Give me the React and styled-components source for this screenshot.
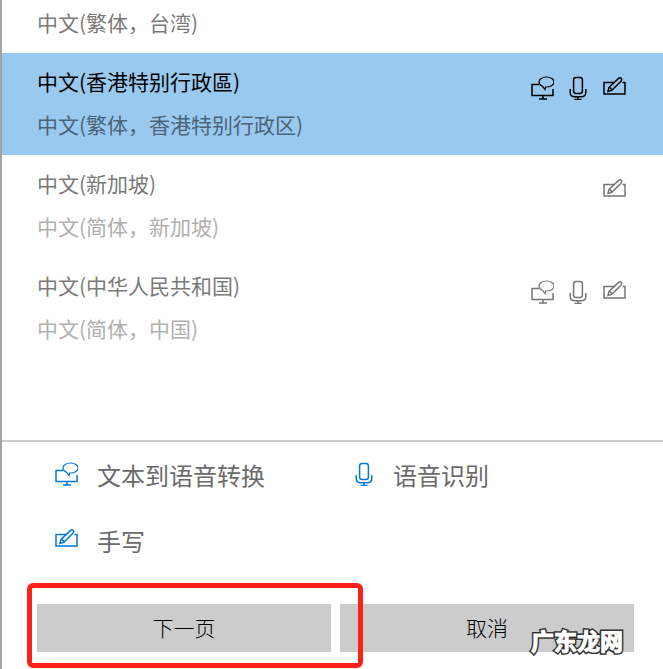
import React from 'react';
import styled, { createGlobalStyle } from 'styled-components'

const Global = createGlobalStyle`
html, body {
  margin: 0;
  padding: 0;
  background: #fff;
}
body {
  font-family: "Noto Sans CJK SC", "Liberation Sans", sans-serif;
}`

const Page = styled.div`
  position: relative;
  box-sizing: border-box;
  width: 663px;
  height: 669px;
  overflow: hidden;
  border-left: 2px solid #a3a3a3;
  background: #fff;
`

const List = styled.div`
  display: flex;
  flex-direction: column;
  height: 440px;
`

const TopRow = styled.div`
  box-sizing: border-box;
  height: 53px;
  padding: 7px 0 0 35px;
  font-size: 21px;
  line-height: 30px;
  color: #7a7a7a;
`

const Row = styled.div`
  box-sizing: border-box;
  display: flex;
  justify-content: space-between;
  height: 102px;
  padding: 13px 37px 0 35px;
  background: ${p => p.$selected ? '#99c9ef' : 'transparent'};
`

const Names = styled.div`
  display: flex;
  flex-direction: column;
  gap: 13px;
`

const Name = styled.div`
  font-size: 21px;
  line-height: 30px;
  color: ${p => p.$selected ? '#000' : '#7a7a7a'};
`

const SubName = styled.div`
  font-size: 21px;
  line-height: 30px;
  color: ${p => p.$selected ? '#4b6478' : '#b0b0b0'};
`

const Icons = styled.div`
  display: flex;
  gap: 12px;
  height: 24px;
  margin-top: 10px;
  color: ${p => p.$selected ? '#000' : '#767676'};
`

const Divider = styled.div`
  height: 2px;
  background: #cccccc;
`

const Features = styled.div`
  display: grid;
  grid-template-columns: 298px auto;
  grid-auto-rows: 66px;
  justify-content: start;
  padding: 1px 0 0 52px;
  height: 162px;
  box-sizing: border-box;
`

const Feature = styled.div`
  display: flex;
  align-items: flex-start;
  gap: ${p => p.$gap || 19}px;
  padding-top: 15px;
  font-size: 24px;
  line-height: 34px;
  color: #6a6a6a;

  svg {
    color: #0078d7;
    margin-top: 4px;
  }
`

const Buttons = styled.div`
  display: flex;
  gap: 9px;
  padding-left: 35px;
`

const Button = styled.button`
  width: 294px;
  height: 48px;
  padding: 0 0 2px;
  border: 0;
  background: #cccccc;
  color: #000;
  font-family: inherit;
  font-size: 21px;
  font-weight: 300;
`

const Highlight = styled.div`
  position: absolute;
  left: 25px;
  top: 583px;
  width: 336px;
  height: 85px;
  box-sizing: border-box;
  border: 5px solid #fb2118;
  border-radius: 6px;
`

const Watermark = styled.div`
  position: absolute;
  left: 529px;
  top: 623px;
  isolation: isolate;
  font-size: 23px;
  line-height: 34px;
  font-weight: 700;
  color: #fff;
  white-space: nowrap;
  -webkit-text-stroke: 1px #fff;

  &::before {
    content: attr(data-text);
    position: absolute;
    left: 0;
    top: 0;
    z-index: -1;
    color: #333;
    -webkit-text-stroke: 4px #333;
  }
`

function ScreenIcon() {
  return (
    <svg width="24" height="24" viewBox="0 0 24 24" fill="none" stroke="currentColor" strokeWidth="1.5">
      <path d="M9 8.6H2V19.4H23V13" />
      <path d="M13 19.4V23M9 23H17" />
      <path d="M16.5 1C12.3 1 9 3.2 9 6C9 8 10.5 9.5 12.5 10.3L15 13.6L15.5 11C20.5 11.2 24 9 24 6C24 3.2 20.7 1 16.5 1Z" strokeWidth="1.2" />
    </svg>
  )
}

function MicIcon() {
  return (
    <svg width="24" height="24" viewBox="0 0 24 24" fill="none" stroke="currentColor" strokeWidth="1.5">
      <rect x="7.6" y="1.4" width="8.8" height="16" rx="2.4" />
      <path d="M4.2 13V16.2C4.2 19 6.2 20.8 9 20.8H15C17.8 20.8 19.8 19 19.8 16.2V13" />
      <path d="M12 20.8V23.4M8.4 23.4H15.6" />
    </svg>
  )
}

function PenIcon() {
  return (
    <svg width="24" height="24" viewBox="0 0 24 24" fill="none" stroke="currentColor" strokeWidth="1.5">
      <path d="M12.5 6.4H2V18H23V6.4H20.5" />
      <path d="M6 15.4L7 11.4L16.6 2.4C17.4 1.7 18.4 1.7 19.2 2.4C20 3.2 20 4.2 19.2 5L9.8 14.4Z" />
      <path d="M7.4 11.2L10 14" />
    </svg>
  )
}

const languages = [
  { name: '中文(香港特别行政區)', sub: '中文(繁体，香港特别行政区)', selected: true, icons: [ScreenIcon, MicIcon, PenIcon] },
  { name: '中文(新加坡)', sub: '中文(简体，新加坡)', icons: [PenIcon] },
  { name: '中文(中华人民共和国)', sub: '中文(简体，中国)', icons: [ScreenIcon, MicIcon, PenIcon] },
]

function App() {
  return (
    <Page>
      <Global />
      <List>
        <TopRow>中文(繁体，台湾)</TopRow>
        {languages.map(({ name, sub, selected, icons }) => (
          <Row key={name} $selected={selected}>
            <Names>
              <Name $selected={selected}>{name}</Name>
              <SubName $selected={selected}>{sub}</SubName>
            </Names>
            <Icons $selected={selected}>
              {icons.map((Icon, i) => <Icon key={i} />)}
            </Icons>
          </Row>
        ))}
      </List>
      <Divider />
      <Features>
        <Feature><ScreenIcon />文本到语音转换</Feature>
        <Feature $gap={17}><MicIcon />语音识别</Feature>
        <Feature><PenIcon />手写</Feature>
      </Features>
      <Buttons>
        <Button>下一页</Button>
        <Button>取消</Button>
      </Buttons>
      <Highlight />
      <Watermark data-text="广东龙网">广东龙网</Watermark>
    </Page>
  );
}

export default App;
